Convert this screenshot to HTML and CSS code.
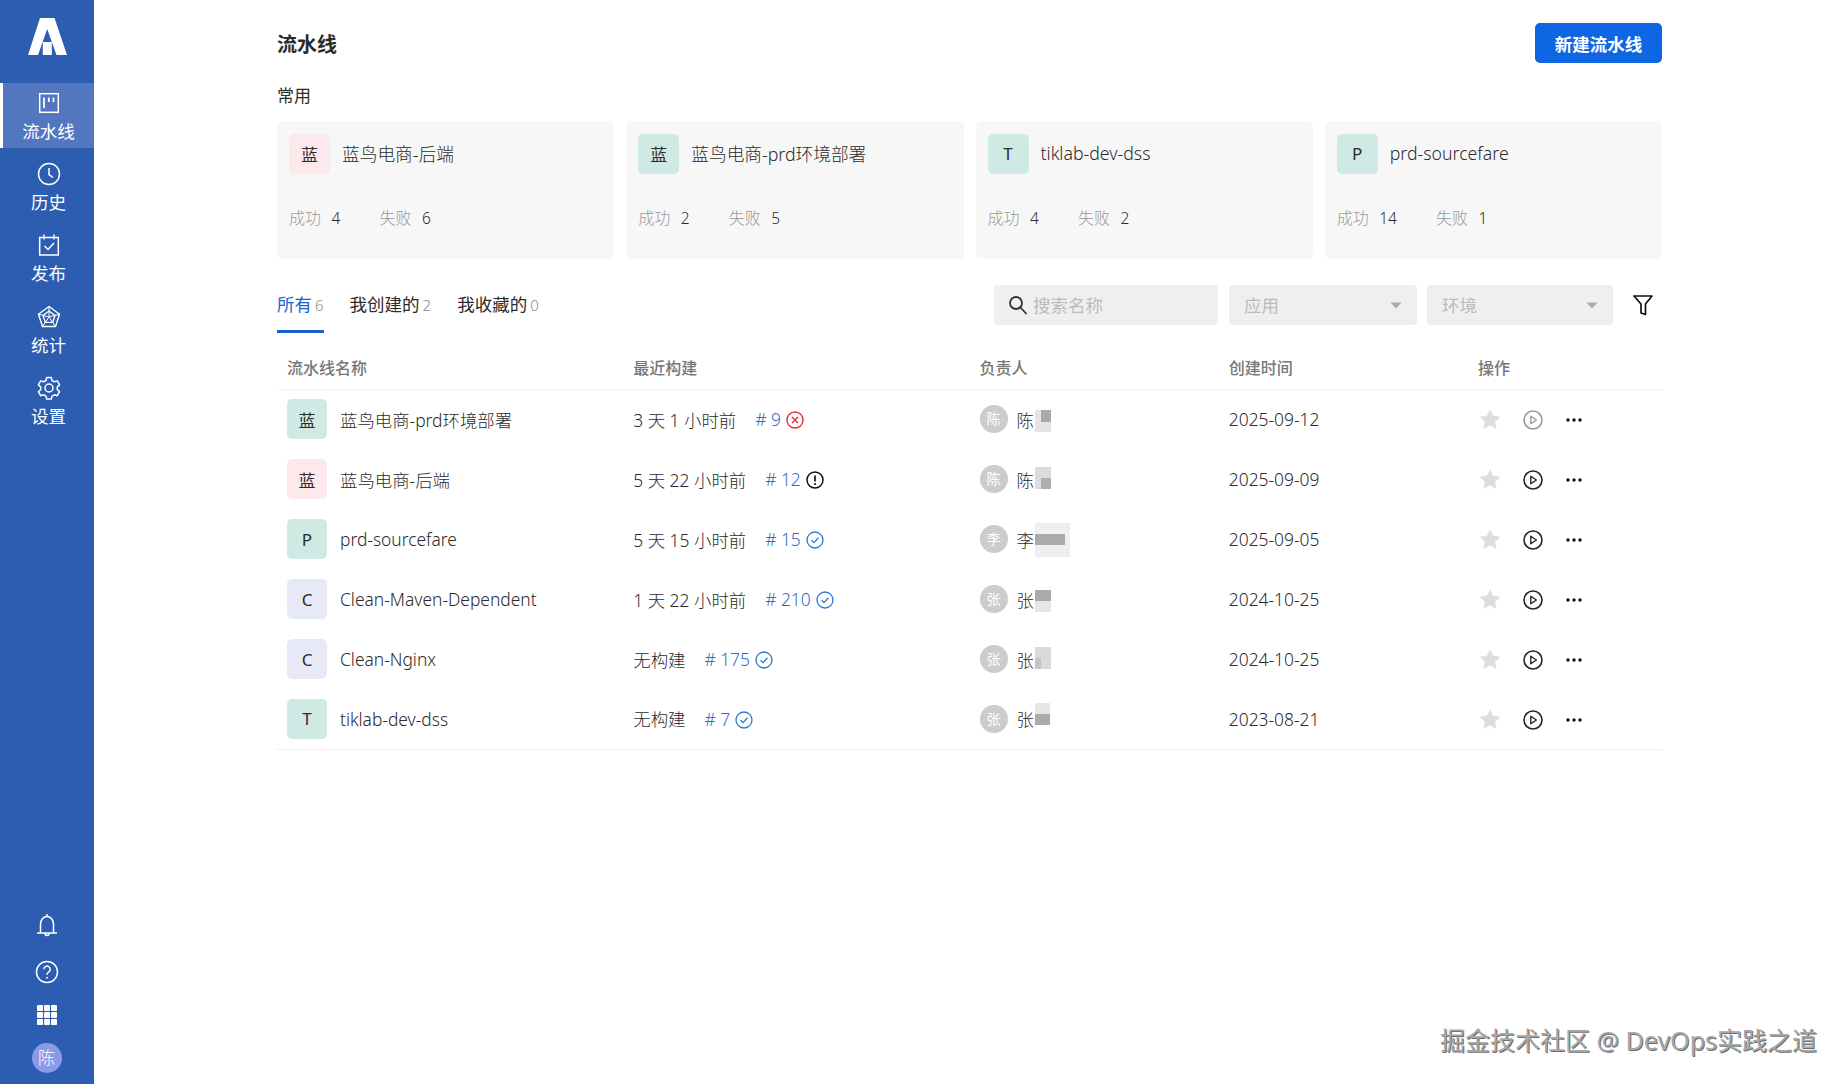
FILE: index.html
```html
<!DOCTYPE html>
<html lang="zh">
<head>
<meta charset="utf-8">
<title>流水线</title>
<link rel="stylesheet" href="styles.css">
</head>
<body>
<svg class="defs" width="0" height="0" aria-hidden="true">
  <symbol id="i-star" viewBox="0 0 20 20"><path d="M10 .5l2.800 5.600 6.700 1-4.900 4.400 1.300 6.600L10 14.800l-5.900 3.300 1.300-6.600L.5 7.100l6.700-1z" fill="currentColor"/></symbol>
  <symbol id="i-play" viewBox="0 0 20 20"><circle cx="10" cy="10" r="9" fill="none" stroke="currentColor" stroke-width="1.6"/><path d="M7.800 6.200v7.600l5.600-3.800z" fill="none" stroke="currentColor" stroke-width="1.3" stroke-linejoin="round"/></symbol>
  <symbol id="i-dots" viewBox="0 0 16 4"><circle cx="2" cy="2" r="1.7" fill="currentColor"/><circle cx="8" cy="2" r="1.7" fill="currentColor"/><circle cx="14" cy="2" r="1.7" fill="currentColor"/></symbol>
  <symbol id="i-ok" viewBox="0 0 18 18"><circle cx="9" cy="9" r="8" fill="none" stroke="currentColor" stroke-width="1.3"/><path d="M5.600 9.200l2.400 2.400 4.400-4.800" fill="none" stroke="currentColor" stroke-width="1.3"/></symbol>
  <symbol id="i-fail" viewBox="0 0 18 18"><circle cx="9" cy="9" r="8" fill="none" stroke="currentColor" stroke-width="1.5"/><path d="M6 6l6 6M12 6l-6 6" fill="none" stroke="currentColor" stroke-width="1.5"/></symbol>
  <symbol id="i-warn" viewBox="0 0 18 18"><circle cx="9" cy="9" r="8" fill="none" stroke="currentColor" stroke-width="1.5"/><path d="M9 4.500v6" fill="none" stroke="currentColor" stroke-width="1.7"/><circle cx="9" cy="13" r="1.100" fill="currentColor"/></symbol>
  <symbol id="i-caret" viewBox="0 0 12 7"><path d="M.5 .5h11L6 6.500z" fill="currentColor"/></symbol>
</svg>

<aside class="sidebar">
  <div class="logo">
    <svg width="39" height="37" viewBox="0 0 39 37"><path fill="#fff" fill-rule="evenodd" d="M12 0h14.500L39 37H0zM19.200 11L10 37h4.800V24h9v13H28.500z"/></svg>
  </div>
  <nav class="nav">
    <a class="nav-item active">
      <svg width="24" height="24" viewBox="0 0 24 24" fill="none" stroke="#fff" stroke-width="1.5"><rect x="2.700" y="2.700" width="18.600" height="18.600"/><path d="M7 6.500v10.500M11.800 6.500v4.500M16.500 6.500v4.500" stroke-width="1.800"/></svg>
      <span>流水线</span>
    </a>
    <a class="nav-item">
      <svg width="24" height="24" viewBox="0 0 24 24" fill="none" stroke="#fff" stroke-width="1.5"><circle cx="12" cy="12" r="10.500"/><path d="M12 6v6.500l4 3"/></svg>
      <span>历史</span>
    </a>
    <a class="nav-item">
      <svg width="24" height="24" viewBox="0 0 24 24" fill="none" stroke="#fff" stroke-width="1.500"><path d="M2.700 4.500h18.600v17.500H2.700z"/><path d="M7 1.500v5M17 1.500v5"/><path d="M7.500 13l3.500 3.500 6-6.500"/></svg>
      <span>发布</span>
    </a>
    <a class="nav-item nudge">
      <svg width="24" height="24" viewBox="0 0 24 24" fill="none" stroke="#fff" stroke-width="1.400"><path d="M12 1.500l10.500 7.700-4 12.300H5.500l-4-12.300z"/><path d="M12 6l6 4.400-2.300 7H8.300l-2.300-7z"/><path d="M12 1.500V12M22.500 9.200L12 12M18.500 21.500L12 12M5.500 21.500L12 12M1.500 9.200L12 12" stroke-width="1"/></svg>
      <span>统计</span>
    </a>
    <a class="nav-item">
      <svg width="24" height="24" viewBox="0 0 24 24" fill="none" stroke="#fff" stroke-width="1.500"><path d="M9.700 1.500h4.600l.7 3 2.300 1.300 3-.9 2.300 4-2.300 2.100v2.600l2.300 2.100-2.300 4-3-.9-2.300 1.300-.7 3H9.700l-.7-3-2.300-1.300-3 .9-2.300-4 2.300-2.100v-2.600L1.400 8.900l2.300-4 3 .9L9 4.500z" stroke-linejoin="round"/><circle cx="12" cy="12" r="4"/></svg>
      <span>设置</span>
    </a>
  </nav>
  <div class="side-foot">
    <svg class="foot-bell" width="24" height="24" viewBox="0 0 24 24" fill="none" stroke="#fff" stroke-width="1.500"><path d="M12 1v2M5.500 20V11a6.500 7.500 0 0 1 13 0v9M2 20h20M10 20.500c0 2.500 4 2.500 4 0"/></svg>
    <svg width="24" height="24" viewBox="0 0 24 24" fill="none" stroke="#fff" stroke-width="1.500"><circle cx="12" cy="12" r="10.500"/><path d="M8.800 9.300a3.200 3.200 0 1 1 4.900 2.700c-1.200.8-1.700 1.400-1.700 2.800"/><circle cx="12" cy="17.700" r="1" fill="#fff" stroke="none"/></svg>
    <svg class="foot-grid" width="20" height="20" viewBox="0 0 20 20" fill="#fff"><rect width="6" height="6" rx=".8"/><rect x="7" width="6" height="6" rx=".8"/><rect x="14" width="6" height="6" rx=".8"/><rect y="7" width="6" height="6" rx=".8"/><rect x="7" y="7" width="6" height="6" rx=".8"/><rect x="14" y="7" width="6" height="6" rx=".8"/><rect y="14" width="6" height="6" rx=".8"/><rect x="7" y="14" width="6" height="6" rx=".8"/><rect x="14" y="14" width="6" height="6" rx=".8"/></svg>
    <div class="me">陈</div>
  </div>
</aside>

<main class="main">
  <header class="top">
    <h1>流水线</h1>
    <button class="btn-new">新建流水线</button>
  </header>

  <div class="sec-label">常用</div>
  <section class="cards">
    <article class="card">
      <div class="card-head"><span class="tile tile-card pink">蓝</span><span class="card-name">蓝鸟电商-后端</span></div>
      <div class="stats"><span class="stat"><em>成功</em>4</span><span class="stat"><em>失败</em>6</span></div>
    </article>
    <article class="card">
      <div class="card-head"><span class="tile tile-card teal">蓝</span><span class="card-name">蓝鸟电商-prd环境部署</span></div>
      <div class="stats"><span class="stat"><em>成功</em>2</span><span class="stat"><em>失败</em>5</span></div>
    </article>
    <article class="card">
      <div class="card-head"><span class="tile tile-card teal">T</span><span class="card-name">tiklab-dev-dss</span></div>
      <div class="stats"><span class="stat"><em>成功</em>4</span><span class="stat"><em>失败</em>2</span></div>
    </article>
    <article class="card">
      <div class="card-head"><span class="tile tile-card teal">P</span><span class="card-name">prd-sourcefare</span></div>
      <div class="stats"><span class="stat"><em>成功</em>14</span><span class="stat"><em>失败</em>1</span></div>
    </article>
  </section>

  <section class="toolbar">
    <div class="tabs">
      <a class="tab current">所有<small>6</small></a>
      <a class="tab">我创建的<small>2</small></a>
      <a class="tab">我收藏的<small>0</small></a>
    </div>
    <div class="filters">
      <div class="field search">
        <svg width="20" height="20" viewBox="0 0 20 20" fill="none" stroke="#333" stroke-width="1.800"><circle cx="8" cy="8" r="6"/><path d="M12.500 12.500l6 6.500"/></svg>
        <span>搜索名称</span>
      </div>
      <div class="field select sel-app"><span>应用</span><svg class="caret" width="12" height="7"><use href="#i-caret"/></svg></div>
      <div class="field select sel-env"><span>环境</span><svg class="caret" width="12" height="7"><use href="#i-caret"/></svg></div>
      <svg class="funnel" width="20" height="22" viewBox="0 0 20 22" fill="none" stroke="#111" stroke-width="1.700"><path d="M1 2h18l-6.500 8v10.500l-4.500-1.500V10z" stroke-linejoin="round"/></svg>
    </div>
  </section>

  <table class="list">
    <thead>
      <tr><th class="c1">流水线名称</th><th class="c2">最近构建</th><th class="c3">负责人</th><th class="c4">创建时间</th><th class="c5">操作</th></tr>
    </thead>
    <tbody>
      <tr>
        <td><div class="name"><span class="tile teal">蓝</span>蓝鸟电商-prd环境部署</div></td>
        <td><div class="build">3 天 1 小时前<a>#&nbsp;9</a><svg class="st fail" width="18" height="18"><use href="#i-fail"/></svg></div></td>
        <td><div class="owner"><span class="ava">陈</span>陈<i class="mosaic m1"></i></div></td>
        <td>2025-09-12</td>
        <td><div class="ops"><svg class="star" width="22" height="22"><use href="#i-star"/></svg><svg class="play off" width="20" height="20"><use href="#i-play"/></svg><svg class="dots" width="16" height="4"><use href="#i-dots"/></svg></div></td>
      </tr>
      <tr>
        <td><div class="name"><span class="tile pink">蓝</span>蓝鸟电商-后端</div></td>
        <td><div class="build">5 天 22 小时前<a>#&nbsp;12</a><svg class="st warn" width="18" height="18"><use href="#i-warn"/></svg></div></td>
        <td><div class="owner"><span class="ava">陈</span>陈<i class="mosaic m2"></i></div></td>
        <td>2025-09-09</td>
        <td><div class="ops"><svg class="star" width="22" height="22"><use href="#i-star"/></svg><svg class="play" width="20" height="20"><use href="#i-play"/></svg><svg class="dots" width="16" height="4"><use href="#i-dots"/></svg></div></td>
      </tr>
      <tr>
        <td><div class="name"><span class="tile teal">P</span>prd-sourcefare</div></td>
        <td><div class="build">5 天 15 小时前<a>#&nbsp;15</a><svg class="st ok" width="18" height="18"><use href="#i-ok"/></svg></div></td>
        <td><div class="owner"><span class="ava">李</span>李<i class="mosaic m3"></i></div></td>
        <td>2025-09-05</td>
        <td><div class="ops"><svg class="star" width="22" height="22"><use href="#i-star"/></svg><svg class="play" width="20" height="20"><use href="#i-play"/></svg><svg class="dots" width="16" height="4"><use href="#i-dots"/></svg></div></td>
      </tr>
      <tr>
        <td><div class="name"><span class="tile lav">C</span>Clean-Maven-Dependent</div></td>
        <td><div class="build">1 天 22 小时前<a>#&nbsp;210</a><svg class="st ok" width="18" height="18"><use href="#i-ok"/></svg></div></td>
        <td><div class="owner"><span class="ava">张</span>张<i class="mosaic m4"></i></div></td>
        <td>2024-10-25</td>
        <td><div class="ops"><svg class="star" width="22" height="22"><use href="#i-star"/></svg><svg class="play" width="20" height="20"><use href="#i-play"/></svg><svg class="dots" width="16" height="4"><use href="#i-dots"/></svg></div></td>
      </tr>
      <tr>
        <td><div class="name"><span class="tile lav">C</span>Clean-Nginx</div></td>
        <td><div class="build">无构建<a>#&nbsp;175</a><svg class="st ok" width="18" height="18"><use href="#i-ok"/></svg></div></td>
        <td><div class="owner"><span class="ava">张</span>张<i class="mosaic m5"></i></div></td>
        <td>2024-10-25</td>
        <td><div class="ops"><svg class="star" width="22" height="22"><use href="#i-star"/></svg><svg class="play" width="20" height="20"><use href="#i-play"/></svg><svg class="dots" width="16" height="4"><use href="#i-dots"/></svg></div></td>
      </tr>
      <tr>
        <td><div class="name"><span class="tile teal">T</span>tiklab-dev-dss</div></td>
        <td><div class="build">无构建<a>#&nbsp;7</a><svg class="st ok" width="18" height="18"><use href="#i-ok"/></svg></div></td>
        <td><div class="owner"><span class="ava">张</span>张<i class="mosaic m6"></i></div></td>
        <td>2023-08-21</td>
        <td><div class="ops"><svg class="star" width="22" height="22"><use href="#i-star"/></svg><svg class="play" width="20" height="20"><use href="#i-play"/></svg><svg class="dots" width="16" height="4"><use href="#i-dots"/></svg></div></td>
      </tr>
    </tbody>
  </table>
</main>

<div class="watermark">掘金技术社区 @ DevOps实践之道</div>
</body>
</html>
```
FILE: styles.css
```css
* { box-sizing: border-box; }
html, body { margin: 0; height: 100%; }
body {
  display: flex;
  height: 1084px;
  overflow: hidden;
  background: #fff;
  color: #2b2b2b;
  font-family: "Noto Sans", "Noto Sans CJK SC", sans-serif;
  font-size: 17.5px;
  font-weight: 300;
  position: relative;
}
.defs { position: absolute; }

/* sidebar */
.sidebar {
  width: 94px;
  flex: none;
  height: 100%;
  background: #2d5db1;
  display: flex;
  flex-direction: column;
  color: #fff;
}
.logo { height: 83px; padding: 18px 0 0 28px; }
.logo svg { display: block; }
.nav { display: flex; flex-direction: column; gap: 6px; }
.nav-item {
  height: 65px;
  padding-top: 8px;
  display: flex;
  flex-direction: column;
  align-items: center;
  gap: 4px;
  border-left: 3px solid transparent;
  font-size: 17.500px;
  line-height: 25px;
  font-weight: 400;
}
.nav-item svg { display: block; }
.nav-item.active { background: #5276bf; border-left-color: #fff; }
.nav-item.nudge { margin-top: 1px; }
.side-foot {
  margin-top: auto;
  padding-bottom: 11px;
  padding-right: 1px;
  display: flex;
  flex-direction: column;
  align-items: center;
  gap: 23px;
}
.foot-grid { margin-top: -2px; }
.me {
  width: 30px;
  height: 30px;
  margin-top: -5px;
  border-radius: 50%;
  background: #8b9ae6;
  font-size: 17px;
  line-height: 30px;
  text-align: center;
}

/* main */
.main { flex: 1; padding: 23px 183px 0 183px; min-width: 0; }
.top { display: flex; justify-content: space-between; align-items: center; height: 40px; }
h1 { margin: 0; font-size: 20px; font-weight: 700; color: #2b2b2b; }
.btn-new {
  width: 127px;
  height: 40px;
  border: 0;
  border-radius: 5px;
  background: #0f66e3;
  color: #fff;
  font: 700 17.500px "Noto Sans", "Noto Sans CJK SC", sans-serif;
}
.sec-label { margin-top: 21px; line-height: 24px; font-size: 17px; font-weight: 400; }

.cards { margin-top: 13px; display: grid; grid-template-columns: repeat(4, 1fr); gap: 12px; }
.card { height: 138px; padding: 13px 12px; background: #f7f7f7; border-radius: 5px; }
.card-head { display: flex; align-items: center; gap: 12px; font-size: 17.700px; }
.card-name { margin-top: -2px; }
.tile {
  width: 40px;
  height: 40px;
  flex: none;
  display: flex;
  align-items: center;
  justify-content: center;
  border-radius: 5px;
  font-size: 17px;
  font-weight: 400;
}
.tile-card { width: 41px; padding-bottom: 2px; }
.pink { background: #fde8ec; }
.teal { background: #cfe9e4; }
.lav { background: #e8e9f6; }
.stats { margin-top: 32px; display: flex; gap: 39px; line-height: 24px; font-size: 15.500px; }
.stat em { font-style: normal; color: #999; font-size: 16px; margin-right: 10.500px; }

.toolbar { margin-top: 26px; display: flex; justify-content: space-between; height: 48px; }
.tabs { display: flex; gap: 26px; }
.tab { height: 48px; line-height: 38px; border-bottom: 3px solid transparent; font-weight: 400; }
.tab small { font-size: 15px; color: #888; margin-left: 3px; font-weight: 300; }
.tab.current { color: #1763d1; border-bottom-color: #1763d1; }
.filters { display: flex; gap: 10px; height: 40px; align-items: center; }
.field {
  height: 40px;
  background: #efefef;
  border-radius: 4px;
  color: #bbb;
  display: flex;
  align-items: center;
  font-weight: 400;
  line-height: 38px;
}
.search { width: 224px; margin-right: 1px; padding-left: 14px; gap: 5px; }
.select { padding: 0 15px; justify-content: space-between; }
.sel-app { width: 188px; }
.sel-env { width: 186px; }
.caret { color: #aaa; }
.funnel { margin: 0 9px 0 10px; flex: none; }

/* table */
.list { width: 100%; margin-top: 12px; border-collapse: collapse; table-layout: fixed; }
th {
  height: 44px;
  padding: 0 10px;
  text-align: left;
  font-size: 16px;
  font-weight: 500;
  color: #777;
  border-bottom: 1px solid #f0f0f0;
}
.c1, .c2 { width: 25%; }
.c3, .c4 { width: 18%; }
.c5 { width: 14%; }
td { height: 60px; padding: 0 10px; font-size: 17.400px; }
tbody tr:last-child td { border-bottom: 1px solid #eee; }
.name { display: flex; align-items: center; gap: 13px; }
.build { display: flex; align-items: center; }
.build a { margin-left: 19px; color: #2a6fc9; }
.st { margin: 2px 0 0 5px; }
.fail { color: #e5383b; }
.warn { color: #111; }
.ok { color: #2a78d0; }
.owner { position: relative; display: flex; align-items: center; gap: 9px; }
.ava {
  width: 28px;
  height: 28px;
  border-radius: 50%;
  background: #ccc;
  color: #fff;
  font-size: 14px;
  line-height: 28px;
  text-align: center;
  font-weight: 400;
}
.mosaic { position: absolute; left: 55px; width: 16px; height: 22px; }
.m1 { top: 5px; background:
  linear-gradient(#aaa, #aaa) right top / 10px 12px no-repeat,
  #e4e4e8; }
.m2 { top: 2px; background:
  linear-gradient(#aeaeae, #aeaeae) right bottom / 10px 11px no-repeat,
  #dcdcdc; }
.m3 { top: -2px; width: 35px; height: 34px; background:
  linear-gradient(#aaa, #aaa) left 11px / 30px 11px no-repeat,
  #f0efef; }
.m4 { top: 5px; background:
  linear-gradient(#aaa, #aaa) top / 100% 11px no-repeat,
  #e6e6e6; }
.m5 { top: 2px; background:
  linear-gradient(#c4c4c4, #c4c4c4) left bottom / 6px 11px no-repeat,
  #dadada; }
.m6 { top: -2px; width: 15px; background:
  linear-gradient(#ababab, #ababab) left 11px / 100% 11px no-repeat,
  #e6e6e6; }
.ops { display: flex; align-items: center; margin: 2px 0 0 1px; height: 22px; }
.star { color: #ddd; }
.play { margin-left: 22px; color: #222; }
.play.off { color: #999; }
.dots { margin-left: 23px; color: #111; }
.ops svg { display: block; }

.watermark {
  position: absolute;
  right: 28px;
  bottom: 26px;
  font-size: 25px;
  line-height: 36px;
  color: #a8a8a8;
  font-weight: 400;
  text-shadow: 1px 1px 0 #6e6e6e;
  white-space: nowrap;
}
```
